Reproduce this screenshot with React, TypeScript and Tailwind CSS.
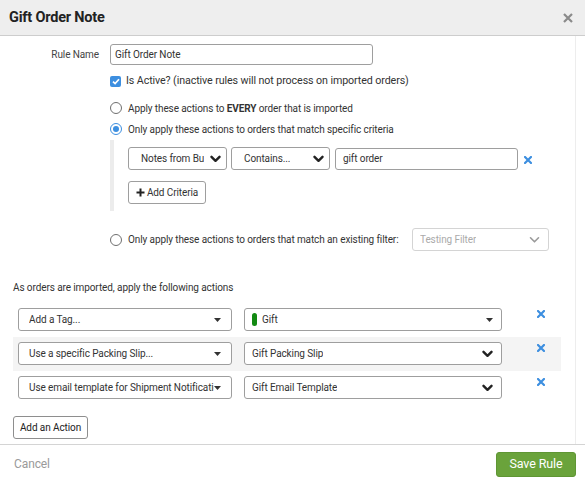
import React from "react";

function Chevron({ light = false }: { light?: boolean }) {
  return (
    <svg width="11" height="8" viewBox="0 0 11 8" className="shrink-0">
      <path
        d="M1.5 1.8 L5.5 5.8 L9.5 1.8"
        fill="none"
        stroke={light ? "#9a9a9a" : "#222"}
        strokeWidth={light ? 1.6 : 2.4}
        strokeLinecap="round"
        strokeLinejoin="round"
      />
    </svg>
  );
}

function Caret() {
  return (
    <svg width="7" height="4" viewBox="0 0 7 4" className="shrink-0">
      <path d="M0 0 L7 0 L3.5 4 Z" fill="#333" />
    </svg>
  );
}

function BlueX() {
  return (
    <svg width="8" height="8" viewBox="0 0 8 8">
      <path d="M1 1 L7 7 M7 1 L1 7" stroke="#3d8fe0" strokeWidth="2.2" strokeLinecap="square" />
    </svg>
  );
}

function Radio({ checked = false }: { checked?: boolean }) {
  if (checked) {
    return (
      <span className="w-[12px] h-[12px] rounded-full border-[1.5px] border-[#3d8fe0] flex items-center justify-center shrink-0">
        <span className="w-[6px] h-[6px] rounded-full bg-[#3d8fe0]" />
      </span>
    );
  }
  return <span className="w-[12px] h-[12px] rounded-full border border-[#6f6f6f] shrink-0" />;
}

function Select({
  children,
  className = "",
  icon = "chevron",
}: {
  children: React.ReactNode;
  className?: string;
  icon?: "chevron" | "caret" | "light";
}) {
  return (
    <div
      className={`flex items-center justify-between h-[23px] border border-[#9e9e9e] rounded-[3px] bg-white text-[#333] ${className}`}
    >
      <div className="flex items-center gap-[5px] overflow-hidden whitespace-nowrap">{children}</div>
      {icon === "caret" ? <Caret /> : <Chevron light={icon === "light"} />}
    </div>
  );
}

const actions = [
  { left: "Add a Tag...", right: "Gift", tag: true, icon: "caret" as const, shaded: false },
  { left: "Use a specific Packing Slip...", right: "Gift Packing Slip", tag: false, icon: "chevron" as const, shaded: true },
  { left: "Use email template for Shipment Notification", right: "Gift Email Template", tag: false, icon: "chevron" as const, shaded: false },
];

export default function App() {
  return (
    <div className="w-[585px] h-[480px] bg-white flex flex-col font-['Roboto',sans-serif] text-[10px] tracking-[-0.1px] text-[#333] overflow-hidden">
      <div className="h-[36px] shrink-0 bg-[#eeeeee] border-b border-[#cdcdcd] flex items-center justify-between pl-[9px] pr-[12px]">
        <h1 className="text-[14.5px] font-bold text-[#222] tracking-[-0.2px]">Gift Order Note</h1>
        <svg width="10" height="10" viewBox="0 0 10 10">
          <path d="M1 1 L9 9 M9 1 L1 9" stroke="#8a8a8a" strokeWidth="2.2" />
        </svg>
      </div>

      <div className="flex-1 flex min-h-0">
        <div className="w-[576px] border-r border-[#ededed] flex flex-col pt-[8px]">
          <div className="flex items-center">
            <label className="w-[99px] text-right text-[#444]">Rule Name</label>
            <div className="ml-[11px] w-[263px] h-[21px] border border-[#9e9e9e] rounded-[3px] flex items-center px-[4px]">
              Gift Order Note
            </div>
          </div>

          <div className="ml-[110px] mt-[10px] h-[12px] flex items-center gap-[5px]">
            <span className="w-[11px] h-[11px] rounded-[2px] bg-[#3d8fe0] flex items-center justify-center shrink-0">
              <svg width="8" height="7" viewBox="0 0 8 7">
                <path d="M1 3.6 L3.1 5.6 L7 1.2" fill="none" stroke="white" strokeWidth="1.7" />
              </svg>
            </span>
            <span className="text-[10.7px]">Is Active? (inactive rules will not process on imported orders)</span>
          </div>

          <div className="ml-[110px] mt-[15px] h-[12px] flex items-center gap-[6px]">
            <Radio />
            <span>
              Apply these actions to <b>EVERY</b> order that is imported
            </span>
          </div>

          <div className="ml-[110px] mt-[9px] h-[12px] flex items-center gap-[6px]">
            <Radio checked />
            <span>Only apply these actions to orders that match specific criteria</span>
          </div>

          <div className="ml-[110px] mt-[5px] flex">
            <div className="w-[4px] bg-[#ececec]" />
            <div className="pl-[14px] pt-[7px] pb-[7px] flex flex-col">
              <div className="flex items-center">
                <Select className="w-[99px] pl-[12px] pr-[5px]">Notes from Bu</Select>
                <Select className="ml-[4px] w-[99px] pl-[12px] pr-[5px]">Contains...</Select>
                <div className="ml-[5px] w-[183px] h-[22px] border border-[#9e9e9e] rounded-[3px] flex items-center px-[7px]">
                  gift order
                </div>
                <span className="ml-[6px] mt-[2px] flex">
                  <BlueX />
                </span>
              </div>
              <button className="mt-[11px] w-[78px] h-[23px] border border-[#9e9e9e] rounded-[3px] flex items-center justify-center gap-[2px] text-[#333]">
                <svg width="9" height="9" viewBox="0 0 9 9">
                  <path d="M4.5 0.5 V8.5 M0.5 4.5 H8.5" stroke="#222" strokeWidth="2" />
                </svg>
                Add Criteria
              </button>
            </div>
          </div>

          <div className="ml-[110px] mt-[17px] flex items-center">
            <Radio />
            <span className="ml-[6px]">Only apply these actions to orders that match an existing filter:</span>
            <Select icon="light" className="ml-auto mr-[26px] w-[137px] border-[#d4d4d4] pl-[7px] pr-[8px] text-[#aaa]">
              Testing Filter
            </Select>
          </div>

          <p className="ml-[13px] mt-[31px] h-[12px] leading-[12px]">As orders are imported, apply the following actions</p>

          <div className="mt-[9px] flex flex-col">
            {actions.map((a) => (
              <div
                key={a.left}
                className={`ml-[13px] w-[548px] h-[34px] pl-[5px] pt-[5px] flex items-start ${a.shaded ? "bg-[#f4f4f4]" : ""}`}
              >
                <Select icon="caret" className="w-[214px] pl-[10px] pr-[10px]">
                  <span className="w-[189px] overflow-hidden whitespace-nowrap">{a.left}</span>
                </Select>
                <Select icon={a.icon} className="ml-[12px] w-[258px] pl-[7px] pr-[8px]">
                  {a.tag && <span className="w-[5px] h-[13px] rounded-full bg-[#138a13] shrink-0" />}
                  {a.right}
                </Select>
                <span className="ml-[35px] mt-[2px] flex">
                  <BlueX />
                </span>
              </div>
            ))}
          </div>

          <button className="ml-[13px] mt-[11px] w-[75px] h-[23px] border border-[#8e8e8e] rounded-[3px] flex items-center justify-center text-[#222]">
            Add an Action
          </button>
        </div>
      </div>

      <div className="h-[36px] shrink-0 border-t border-[#d4d4d4] flex items-center justify-between pl-[14px] pr-[9px] pt-[3px]">
        <span className="text-[12px] text-[#9a9a9a]">Cancel</span>
        <button className="w-[80px] h-[25px] rounded-[3px] bg-[#6aa33b] border border-[#5f9634] text-white text-[12.5px]">
          Save Rule
        </button>
      </div>
    </div>
  );
}
